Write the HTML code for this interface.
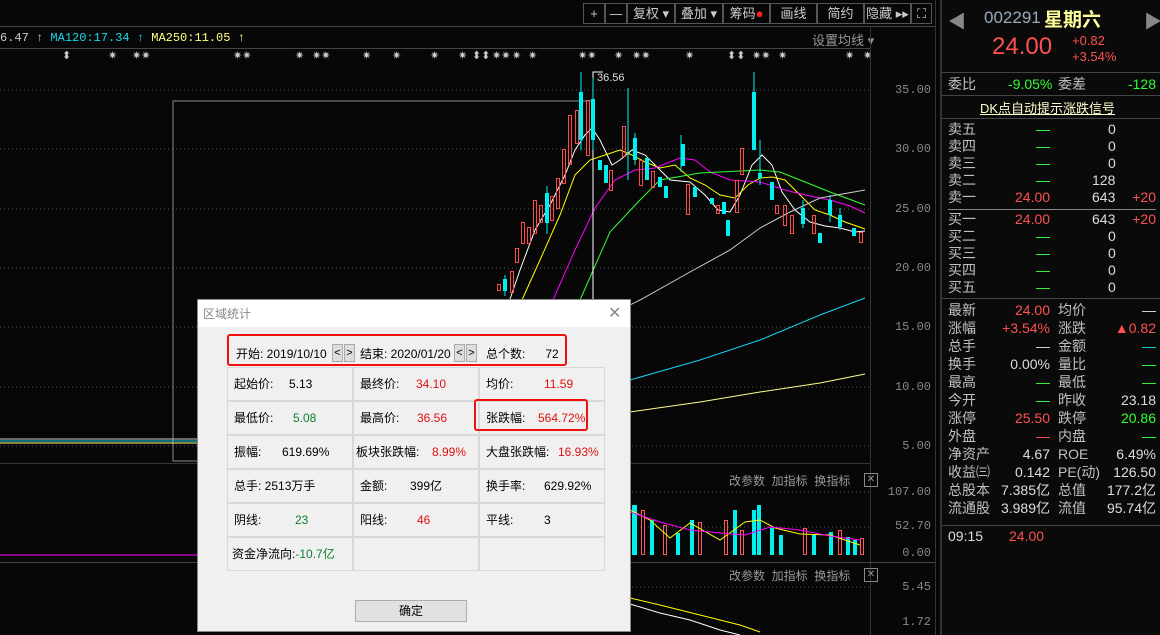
<!DOCTYPE html>
<html><head><meta charset="utf-8">
<style>
*{margin:0;padding:0;box-sizing:border-box}
body{width:1160px;height:635px;background:#070707;overflow:hidden;position:relative;font-family:"Liberation Sans","Noto Sans CJK SC",sans-serif;color:#c0c0c0}
.a{position:absolute;white-space:nowrap}
.m{font-family:"Liberation Mono","Noto Sans CJK SC",monospace}
.ax{position:absolute;right:229px;font-size:12px;color:#888;font-family:"Liberation Mono",monospace;white-space:nowrap}
.tb{position:absolute;top:3px;height:21px;border:1px solid #555;font-size:13px;color:#ccc;text-align:center;line-height:19px}
.rp{position:absolute;left:940px;top:0;width:220px;height:635px;background:#0a0a0a;border-left:2px solid #333}
.row{position:absolute;left:6px;width:208px;height:17px;font-size:14px;line-height:17px}
.row span{position:absolute;white-space:nowrap}
.g{color:#3f3}.r{color:#ff5050}.w{color:#ddd}
.dlg{position:absolute;left:197px;top:299px;width:434px;height:333px;background:#f0f0f0;border:1px solid #888}
.cell{position:absolute;width:126px;height:34px;border:1px solid #d8d8d8;font-size:12px;color:#000;line-height:32px}
.cell span{position:absolute;white-space:nowrap}
.rd{color:#e01010}.gr{color:#108030}
</style></head><body>
<div class="a" style="left:0;top:26px;width:935px;height:1px;background:#444"></div>
<div class="a" style="left:0;top:48px;width:870px;height:1px;background:#444"></div>
<div class="a m" style="left:0;top:31px;font-size:12px;color:#ccc">6.47 ↑ <span style="color:#18d8f0">MA120:17.34 ↑</span> <span style="color:#ffff80">MA250:11.05 ↑</span></div>
<div class="a" style="left:812px;top:30px;font-size:13px;color:#999">设置均线 ▾</div>
<div class="tb" style="left:583px;width:22px">+</div>
<div class="tb" style="left:605px;width:22px">—</div>
<div class="tb" style="left:627px;width:48px">复权 ▾</div>
<div class="tb" style="left:675px;width:48px">叠加 ▾</div>
<div class="tb" style="left:723px;width:47px">筹码<span style="color:#f22">●</span></div>
<div class="tb" style="left:770px;width:47px">画线</div>
<div class="tb" style="left:817px;width:47px">简约</div>
<div class="tb" style="left:864px;width:47px">隐藏 ▸▸</div>
<div class="tb" style="left:911px;width:21px">⛶</div>
<div class="a" style="left:0;top:49px;font-size:11px;color:#ccc;letter-spacing:0">
<span class="a" style="left:62px">⬍</span><span class="a" style="left:108px">✷</span><span class="a" style="left:132px">✷✷</span><span class="a" style="left:233px">✷✷</span><span class="a" style="left:295px">✷</span><span class="a" style="left:312px">✷✷</span><span class="a" style="left:362px">✷</span><span class="a" style="left:392px">✷</span><span class="a" style="left:430px">✷</span><span class="a" style="left:458px">✷</span><span class="a" style="left:472px">⬍⬍</span><span class="a" style="left:492px">✷✷</span><span class="a" style="left:512px">✷</span><span class="a" style="left:528px">✷</span><span class="a" style="left:578px">✷✷</span><span class="a" style="left:614px">✷</span><span class="a" style="left:632px">✷✷</span><span class="a" style="left:685px">✷</span><span class="a" style="left:727px">⬍⬍</span><span class="a" style="left:752px">✷✷</span><span class="a" style="left:778px">✷</span><span class="a" style="left:845px">✷</span><span class="a" style="left:863px">✷</span></div>
<div class="a" style="left:870px;top:26px;width:1px;height:609px;background:#333"></div>
<div class="a" style="left:935px;top:0;width:1px;height:635px;background:#333"></div>
<div class="a" style="left:0;top:463px;width:870px;height:1px;background:#333"></div>
<div class="a" style="left:0;top:562px;width:935px;height:1px;background:#444"></div>
<div class="ax" style="top:83px">35.00</div>
<div class="ax" style="top:142px">30.00</div>
<div class="ax" style="top:202px">25.00</div>
<div class="ax" style="top:261px">20.00</div>
<div class="ax" style="top:320px">15.00</div>
<div class="ax" style="top:380px">10.00</div>
<div class="ax" style="top:439px">5.00</div>
<div class="ax" style="top:485px">107.00</div>
<div class="ax" style="top:519px">52.70</div>
<div class="ax" style="top:546px">0.00</div>
<div class="ax" style="top:580px">5.45</div>
<div class="ax" style="top:615px">1.72</div>
<div class="a" style="left:729px;top:472px;font-size:12px;color:#999">改参数 &nbsp;加指标 &nbsp;换指标</div>
<div class="a" style="left:864px;top:473px;width:14px;height:14px;border:1px solid #888;font-size:10px;line-height:12px;text-align:center;color:#999">✕</div>
<div class="a" style="left:729px;top:567px;font-size:12px;color:#999">改参数 &nbsp;加指标 &nbsp;换指标</div>
<div class="a" style="left:864px;top:568px;width:14px;height:14px;border:1px solid #888;font-size:10px;line-height:12px;text-align:center;color:#999">✕</div>
<div class="a" style="left:597px;top:72px;font-size:11px;color:#ddd" >36.56</div>
<svg class="a" style="left:0;top:0" width="935" height="635">
<g stroke="#555" stroke-dasharray="1,3">
<line x1="0" y1="90" x2="870" y2="90"/><line x1="0" y1="149" x2="870" y2="149"/><line x1="0" y1="209" x2="870" y2="209"/><line x1="0" y1="268" x2="870" y2="268"/><line x1="0" y1="327" x2="870" y2="327"/><line x1="0" y1="387" x2="870" y2="387"/><line x1="0" y1="446" x2="870" y2="446"/><line x1="620" y1="492" x2="870" y2="492"/><line x1="620" y1="527" x2="870" y2="527"/><line x1="620" y1="587" x2="870" y2="587"/>
</g>
<rect x="173" y="101" width="420" height="360" fill="none" stroke="#888"/>
<g stroke-width="1">
<polyline fill="none" stroke="#fff" points="508,305 520,270 535,230 550,205 565,175 575,150 585,135 592,128 600,140 612,165 620,160 632,150 645,155 660,170 670,180 690,182 705,195 718,210 730,212 740,195 752,165 762,155 772,165 782,192 795,210 810,222 825,226 840,228 855,232 865,231"/>
<polyline fill="none" stroke="#ff0" points="522,300 540,260 560,215 575,175 590,160 605,155 620,150 632,155 645,162 660,168 675,165 690,178 705,185 720,195 735,198 748,185 760,178 772,177 785,180 800,195 815,210 830,215 845,222 865,229"/>
<polyline fill="none" stroke="#f0f" points="553,300 575,250 595,208 615,180 635,170 655,168 680,158 695,160 710,172 730,180 760,182 785,190 805,195 830,200 850,206 865,213"/>
<polyline fill="none" stroke="#3f3" points="580,300 610,232 640,200 660,180 700,173 740,171 760,170 780,172 800,180 830,192 865,205"/>
<polyline fill="none" stroke="#ccc" points="600,320 640,300 690,272 730,250 760,228 790,212 820,198 865,190"/>
<polyline fill="none" stroke="#18d0f0" points="630,380 700,360 760,340 820,315 865,298"/>
<polyline fill="none" stroke="#ff8" points="630,412 700,402 760,392 820,383 865,374"/>
<polyline fill="none" stroke="#fff" points="603,72 593,72 593,299"/>
<line x1="0" y1="443" x2="197" y2="443" stroke="#ff8"/><line x1="0" y1="441" x2="197" y2="441" stroke="#18d0f0"/><line x1="0" y1="439" x2="197" y2="439" stroke="#ccc"/>
<line x1="0" y1="555" x2="197" y2="555" stroke="#f0f"/>
<polyline fill="none" stroke="#ff0" points="630,598 660,605 700,615 740,625 760,632"/>
<polyline fill="none" stroke="#fff" points="630,604 660,613 690,620 720,630 740,635"/>
</g>
<g fill="#00f0f0"><rect x="503" y="279" width="4" height="12"/><rect x="545" y="193" width="4" height="30"/><rect x="579" y="92" width="4" height="48"/><rect x="591" y="99" width="4" height="41"/><rect x="598" y="160" width="4" height="10"/><rect x="604" y="165" width="4" height="18"/><rect x="633" y="138" width="4" height="22"/><rect x="645" y="158" width="4" height="22"/><rect x="658" y="177" width="4" height="10"/><rect x="664" y="186" width="4" height="12"/><rect x="681" y="144" width="4" height="22"/><rect x="693" y="187" width="4" height="10"/><rect x="710" y="198" width="4" height="6"/><rect x="722" y="202" width="4" height="12"/><rect x="726" y="220" width="4" height="16"/><rect x="752" y="92" width="4" height="58"/><rect x="758" y="173" width="4" height="5"/><rect x="770" y="182" width="4" height="18"/><rect x="801" y="208" width="4" height="16"/><rect x="818" y="233" width="4" height="10"/><rect x="828" y="200" width="4" height="15"/><rect x="838" y="215" width="4" height="12"/><rect x="852" y="228" width="4" height="8"/></g>
<g stroke="#00f0f0"><line x1="505" y1="275" x2="505" y2="296"/><line x1="547" y1="186" x2="547" y2="234"/><line x1="581" y1="72" x2="581" y2="150"/><line x1="593" y1="78" x2="593" y2="150"/><line x1="628" y1="88" x2="628" y2="180"/><line x1="635" y1="133" x2="635" y2="165"/><line x1="681" y1="135" x2="681" y2="172"/><line x1="754" y1="72" x2="754" y2="150"/><line x1="760" y1="140" x2="760" y2="185"/><line x1="803" y1="200" x2="803" y2="228"/><line x1="830" y1="195" x2="830" y2="222"/><line x1="840" y1="208" x2="840" y2="230"/></g>
<g fill="none" stroke="#ff4a4a"><rect x="497.5" y="284.5" width="3" height="6"/><rect x="510.5" y="271.5" width="3" height="21"/><rect x="515.5" y="248.5" width="3" height="14"/><rect x="521.5" y="222.5" width="3" height="21"/><rect x="527.5" y="227.5" width="3" height="16"/><rect x="533.5" y="200.5" width="3" height="33"/><rect x="539.5" y="205.5" width="3" height="17"/><rect x="550.5" y="196.5" width="3" height="24"/><rect x="556.5" y="178.5" width="3" height="30"/><rect x="562.5" y="149.5" width="3" height="34"/><rect x="568.5" y="115.5" width="3" height="49"/><rect x="575.5" y="110.5" width="3" height="33"/><rect x="586.5" y="100.5" width="3" height="55"/><rect x="609.5" y="170.5" width="3" height="20"/><rect x="622.5" y="126.5" width="3" height="30"/><rect x="639.5" y="160.5" width="3" height="25"/><rect x="651.5" y="171.5" width="3" height="16"/><rect x="686.5" y="184.5" width="3" height="30"/><rect x="716.5" y="205.5" width="3" height="8"/><rect x="735.5" y="180.5" width="3" height="32"/><rect x="740.5" y="148.5" width="3" height="26"/><rect x="775.5" y="205.5" width="3" height="8"/><rect x="783.5" y="205.5" width="3" height="20"/><rect x="790.5" y="215.5" width="3" height="18"/><rect x="812.5" y="215.5" width="3" height="18"/><rect x="859.5" y="232.5" width="3" height="10"/></g>
<g fill="#00f0f0"><rect x="632" y="505" width="5" height="50"/><rect x="650" y="520" width="4" height="35"/><rect x="676" y="533" width="4" height="22"/><rect x="690" y="520" width="4" height="35"/><rect x="733" y="510" width="4" height="45"/><rect x="752" y="510" width="4" height="45"/><rect x="757" y="505" width="4" height="50"/><rect x="770" y="528" width="4" height="27"/><rect x="779" y="535" width="4" height="20"/><rect x="812" y="535" width="4" height="20"/><rect x="829" y="532" width="4" height="23"/><rect x="846" y="537" width="4" height="18"/><rect x="853" y="540" width="4" height="15"/></g>
<g fill="none" stroke="#ff5a5a"><rect x="641.5" y="510.5" width="3" height="44"/><rect x="663.5" y="525.5" width="3" height="29"/><rect x="698.5" y="522.5" width="3" height="32"/><rect x="724.5" y="520.5" width="3" height="34"/><rect x="740.5" y="530.5" width="3" height="24"/><rect x="803.5" y="528.5" width="3" height="26"/><rect x="838.5" y="530.5" width="3" height="24"/><rect x="860.5" y="538.5" width="3" height="16"/></g>
<polyline fill="none" stroke="#ff0" points="630,510 650,520 670,538 690,523 720,540 745,522 760,520 775,528 800,534 830,535 860,545"/>
<polyline fill="none" stroke="#f0f" points="630,512 660,522 690,530 720,533 745,535 770,527 800,530 830,536 860,540"/>
</svg>
<div class="rp">
<div class="a" style="left:6px;top:8px;font-size:18px;color:#888">◀</div>
<div class="a" style="left:202px;top:8px;font-size:18px;color:#888">▶</div>
<div class="a" style="left:42px;top:8px;font-size:17px;color:#9ab">002291</div>
<div class="a" style="left:102px;top:5px;font-size:19px;color:#ff9;font-weight:bold">星期六</div>
<div class="a" style="left:50px;top:33px;font-size:24px;color:#ff5050">24.00</div>
<div class="a" style="left:130px;top:33px;font-size:13px;color:#ff5050;line-height:16px">+0.82<br>+3.54%</div>
<div class="a" style="left:0;top:72px;width:220px;height:1px;background:#444"></div>
<div class="row" style="top:76px"><span>委比</span><span class="g" style="left:60px">-9.05%</span><span style="left:110px">委差</span><span class="g" style="right:0">-128</span></div>
<div class="a" style="left:0;top:95px;width:220px;height:1px;background:#444"></div>
<div class="a" style="left:38px;top:98px;font-size:13px;color:#ffc;text-decoration:underline">DK点自动提示涨跌信号</div>
<div class="a" style="left:0;top:118px;width:220px;height:1px;background:#444"></div>
<div class="row" style="top:121px"><span>卖五</span><span class="g" style="left:88px">—</span><span class="w" style="left:160px">0</span></div>
<div class="row" style="top:138px"><span>卖四</span><span class="g" style="left:88px">—</span><span class="w" style="left:160px">0</span></div>
<div class="row" style="top:155px"><span>卖三</span><span class="g" style="left:88px">—</span><span class="w" style="left:160px">0</span></div>
<div class="row" style="top:172px"><span>卖二</span><span class="g" style="left:88px">—</span><span class="w" style="left:144px">128</span></div>
<div class="row" style="top:189px"><span>卖一</span><span class="r" style="left:67px">24.00</span><span class="w" style="left:144px">643</span><span class="r" style="right:0">+20</span></div>
<div class="a" style="left:6px;top:209px;width:208px;height:1px;background:#888"></div>
<div class="row" style="top:211px"><span>买一</span><span class="r" style="left:67px">24.00</span><span class="w" style="left:144px">643</span><span class="r" style="right:0">+20</span></div>
<div class="row" style="top:228px"><span>买二</span><span class="g" style="left:88px">—</span><span class="w" style="left:160px">0</span></div>
<div class="row" style="top:245px"><span>买三</span><span class="g" style="left:88px">—</span><span class="w" style="left:160px">0</span></div>
<div class="row" style="top:262px"><span>买四</span><span class="g" style="left:88px">—</span><span class="w" style="left:160px">0</span></div>
<div class="row" style="top:279px"><span>买五</span><span class="g" style="left:88px">—</span><span class="w" style="left:160px">0</span></div>
<div class="a" style="left:0;top:298px;width:220px;height:1px;background:#444"></div>
<div class="row" style="top:302px"><span>最新</span><span class="r" style="right:106px">24.00</span><span style="left:110px">均价</span><span class="w" style="right:0">—</span></div>
<div class="row" style="top:320px"><span>涨幅</span><span class="r" style="right:106px">+3.54%</span><span style="left:110px">涨跌</span><span class="r" style="right:0">▲0.82</span></div>
<div class="row" style="top:338px"><span>总手</span><span class="w" style="right:106px">—</span><span style="left:110px">金额</span><span style="right:0;color:#0dd">—</span></div>
<div class="row" style="top:356px"><span>换手</span><span class="w" style="right:106px">0.00%</span><span style="left:110px">量比</span><span class="g" style="right:0">—</span></div>
<div class="row" style="top:374px"><span>最高</span><span class="g" style="right:106px">—</span><span style="left:110px">最低</span><span class="g" style="right:0">—</span></div>
<div class="row" style="top:392px"><span>今开</span><span class="g" style="right:106px">—</span><span style="left:110px">昨收</span><span class="w" style="right:0">23.18</span></div>
<div class="row" style="top:410px"><span>涨停</span><span class="r" style="right:106px">25.50</span><span style="left:110px">跌停</span><span class="g" style="right:0">20.86</span></div>
<div class="row" style="top:428px"><span>外盘</span><span class="r" style="right:106px">—</span><span style="left:110px">内盘</span><span class="g" style="right:0">—</span></div>
<div class="row" style="top:446px"><span>净资产</span><span class="w" style="right:106px">4.67</span><span style="left:110px">ROE</span><span class="w" style="right:0">6.49%</span></div>
<div class="row" style="top:464px"><span>收益㈢</span><span class="w" style="right:106px">0.142</span><span style="left:110px">PE(动)</span><span class="w" style="right:0">126.50</span></div>
<div class="row" style="top:482px"><span>总股本</span><span class="w" style="right:106px">7.385亿</span><span style="left:110px">总值</span><span class="w" style="right:0">177.2亿</span></div>
<div class="row" style="top:500px"><span>流通股</span><span class="w" style="right:106px">3.989亿</span><span style="left:110px">流值</span><span class="w" style="right:0">95.74亿</span></div>
<div class="a" style="left:0;top:525px;width:220px;height:1px;background:#444"></div>
<div class="row" style="top:528px"><span class="w">09:15</span><span class="r" style="left:61px">24.00</span></div>
</div>
<div class="dlg">
<div class="a" style="left:0;top:0;width:432px;height:27px;background:#fff"></div>
<div class="a" style="left:5px;top:5px;font-size:12px;color:#888">区域统计</div>
<div class="a" style="left:410px;top:3px;font-size:16px;color:#888">✕</div>
<div class="a" style="left:29px;top:34px;width:340px;height:32px;border:2px solid #f01010;border-radius:3px"></div>
<div class="a" style="left:38px;top:45px;font-size:12px;color:#000">开始: 2019/10/10</div>
<div class="a" style="left:134px;top:44px;width:11px;height:18px;border:1px solid #aaa;background:#ddd;font-size:11px;text-align:center;line-height:16px;color:#000">&lt;</div>
<div class="a" style="left:146px;top:44px;width:11px;height:18px;border:1px solid #aaa;background:#ddd;font-size:11px;text-align:center;line-height:16px;color:#000">&gt;</div>
<div class="a" style="left:162px;top:45px;font-size:12px;color:#000">结束: 2020/01/20</div>
<div class="a" style="left:256px;top:44px;width:11px;height:18px;border:1px solid #aaa;background:#ddd;font-size:11px;text-align:center;line-height:16px;color:#000">&lt;</div>
<div class="a" style="left:268px;top:44px;width:11px;height:18px;border:1px solid #aaa;background:#ddd;font-size:11px;text-align:center;line-height:16px;color:#000">&gt;</div>
<div class="a" style="left:288px;top:45px;font-size:12px;color:#000">总个数: &nbsp; &nbsp; &nbsp;72</div>
<div class="cell" style="left:29px;top:67px"><span style="left:6px">起始价:</span><span style="left:61px">5.13</span></div>
<div class="cell" style="left:155px;top:67px"><span style="left:6px">最终价:</span><span class="rd" style="left:62px">34.10</span></div>
<div class="cell" style="left:281px;top:67px"><span style="left:6px">均价:</span><span class="rd" style="left:64px">11.59</span></div>
<div class="cell" style="left:29px;top:101px"><span style="left:6px">最低价:</span><span class="gr" style="left:65px">5.08</span></div>
<div class="cell" style="left:155px;top:101px"><span style="left:6px">最高价:</span><span class="rd" style="left:63px">36.56</span></div>
<div class="cell" style="left:281px;top:101px"><span style="left:6px">张跌幅:</span><span class="rd" style="left:58px">564.72%</span></div>
<div class="a" style="left:276px;top:99px;width:114px;height:32px;border:2px solid #f01010;border-radius:3px"></div>
<div class="cell" style="left:29px;top:135px"><span style="left:6px">振幅:</span><span style="left:54px">619.69%</span></div>
<div class="cell" style="left:155px;top:135px"><span style="left:2px">板块张跌幅:</span><span class="rd" style="left:78px">8.99%</span></div>
<div class="cell" style="left:281px;top:135px"><span style="left:6px">大盘张跌幅:</span><span class="rd" style="left:78px">16.93%</span></div>
<div class="cell" style="left:29px;top:169px"><span style="left:6px">总手: 2513万手</span></div>
<div class="cell" style="left:155px;top:169px"><span style="left:6px">金额:</span><span style="left:56px">399亿</span></div>
<div class="cell" style="left:281px;top:169px"><span style="left:6px">换手率:</span><span style="left:64px">629.92%</span></div>
<div class="cell" style="left:29px;top:203px"><span style="left:6px">阴线:</span><span class="gr" style="left:67px">23</span></div>
<div class="cell" style="left:155px;top:203px"><span style="left:6px">阳线:</span><span class="rd" style="left:63px">46</span></div>
<div class="cell" style="left:281px;top:203px"><span style="left:6px">平线:</span><span style="left:64px">3</span></div>
<div class="cell" style="left:29px;top:237px"><span style="left:4px">资金净流向: <span class="gr">-10.7亿</span></span></div>
<div class="cell" style="left:155px;top:237px"></div>
<div class="cell" style="left:281px;top:237px"></div>
<div class="a" style="left:157px;top:300px;width:112px;height:22px;border:1px solid #adadad;background:#e1e1e1;font-size:12px;color:#000;text-align:center;line-height:20px">确定</div>
</div>
</body></html>
